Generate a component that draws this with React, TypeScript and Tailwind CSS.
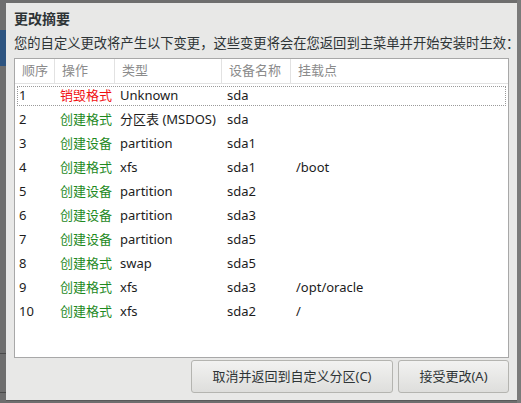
import React from "react";

type Row = {
  no: number;
  action: string;
  destroy?: boolean;
  type: string;
  device: string;
  mount: string;
};

const rows: Row[] = [
  { no: 1, action: "销毁格式", destroy: true, type: "Unknown", device: "sda", mount: "" },
  { no: 2, action: "创建格式", type: "分区表 (MSDOS)", device: "sda", mount: "" },
  { no: 3, action: "创建设备", type: "partition", device: "sda1", mount: "" },
  { no: 4, action: "创建格式", type: "xfs", device: "sda1", mount: "/boot" },
  { no: 5, action: "创建设备", type: "partition", device: "sda2", mount: "" },
  { no: 6, action: "创建设备", type: "partition", device: "sda3", mount: "" },
  { no: 7, action: "创建设备", type: "partition", device: "sda5", mount: "" },
  { no: 8, action: "创建格式", type: "swap", device: "sda5", mount: "" },
  { no: 9, action: "创建格式", type: "xfs", device: "sda3", mount: "/opt/oracle" },
  { no: 10, action: "创建格式", type: "xfs", device: "sda2", mount: "/" },
];

const font = "font-['Noto_Sans','Noto_Sans_CJK_SC',sans-serif]";
const cols = "grid grid-cols-[40px_60px_107px_69px_1fr]";

export default function App() {
  return (
    <div className={`relative w-[521px] h-[403px] overflow-hidden bg-[#6e6e6e] ${font}`}>
      {/* window behind the dialog */}
      <div className="absolute left-0 top-[30px] w-[6px] h-[36px] bg-[#2d5480]" />
      <div className="absolute left-0 top-[353px] w-[6px] h-px bg-[#4a4a4a]" />
      <div className="absolute left-0 top-[392px] w-[6px] h-px bg-[#4a4a4a]" />
      <div className="absolute right-0 top-0 w-[4px] h-[403px] bg-[#7a7a7a]" />

      <div className="absolute left-[6px] top-[3px] w-[511px] h-[398px] bg-[#e8e8e7] border-b border-[#5a5a5a] flex flex-col pt-[7px] px-[8px]">
        <div className="text-[14px] leading-[18px] font-bold text-[#2e3436]">更改摘要</div>
        <div className="mt-[6px] text-[13.3px] leading-[18px] text-[#2e3436] whitespace-nowrap">
          您的自定义更改将产生以下变更，这些变更将会在您返回到主菜单并开始安装时生效：
        </div>

        <div className="mt-[6px] h-[300px] bg-white border border-[#a8a8a8] text-[13px]">
          <div className={`${cols} h-[25px] border-b border-[#e2e2e2] text-[#8b8b8b]`}>
            <div className="flex items-center pl-[7px] border-r border-[#e2e2e2]">顺序</div>
            <div className="flex items-center pl-[7px] border-r border-[#e2e2e2]">操作</div>
            <div className="flex items-center pl-[7px] border-r border-[#e2e2e2]">类型</div>
            <div className="flex items-center pl-[7px] border-r border-[#e2e2e2]">设备名称</div>
            <div className="flex items-center pl-[7px]">挂载点</div>
          </div>
          {rows.map((r) => (
            <div key={r.no} className="relative">
              {r.no === 1 && (
                <div className="absolute left-[2px] right-[2px] top-[2px] bottom-[2px] border border-dotted border-[#9a9a9a]" />
              )}
              <div className={`${cols} h-[24px] items-center text-[#1c1c1c]`}>
                <div className="pl-[4px]">{r.no}</div>
                <div className={`pl-[5px] ${r.destroy ? "text-[#f01010]" : "text-[#1f8a1f]"}`}>{r.action}</div>
                <div className="pl-[5px] whitespace-nowrap">{r.type}</div>
                <div className="pl-[5px]">{r.device}</div>
                <div className="pl-[5px]">{r.mount}</div>
              </div>
            </div>
          ))}
        </div>

        <div className="mt-[2px] flex justify-end gap-[5px]">
          <button className="w-[202px] h-[33px] rounded-[3px] border border-[#b4b4b0] bg-gradient-to-b from-[#f2f2f1] to-[#dededc] text-[13px] text-[#2e3436]">
            取消并返回到自定义分区(C)
          </button>
          <button className="w-[111px] h-[33px] rounded-[3px] border border-[#b4b4b0] bg-gradient-to-b from-[#f2f2f1] to-[#dededc] text-[13px] text-[#2e3436]">
            接受更改(A)
          </button>
        </div>
      </div>
    </div>
  );
}
